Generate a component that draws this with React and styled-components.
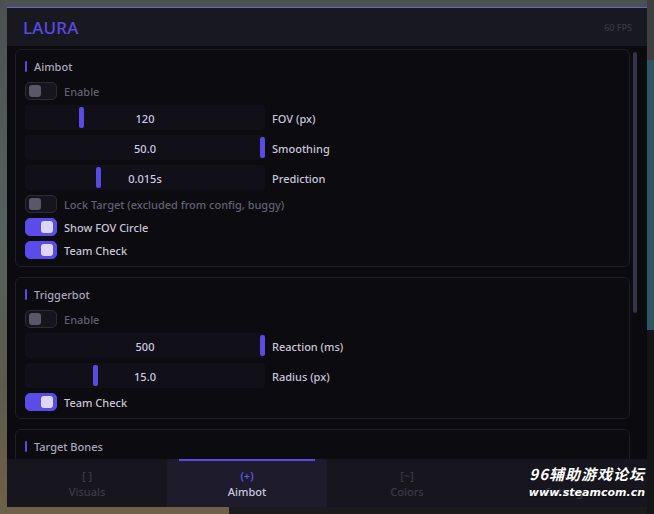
import React from "react";
import styled, { createGlobalStyle } from "styled-components";

const GlobalStyle = createGlobalStyle`
  html, body {
    margin: 0;
    padding: 0;
  }
  body {
    width: 654px;
    height: 514px;
    overflow: hidden;
    font-family: "Noto Sans", "Open Sans", sans-serif;
    background:
      linear-gradient(to bottom, #3f3f40 0 60px, #2f5762 60px 330px, #151517 330px) right top / 7px 100% no-repeat,
      linear-gradient(#1b1b1d, #1b1b1d) 229px bottom / 100% 7px no-repeat,
      linear-gradient(to bottom, #4d5051 0%, #56605f 45%, #5d5a4c 75%, #6d6149 100%);
  }
`;

const Page = styled.div`
  position: relative;
  width: 654px;
  height: 514px;
  padding: 7px 0 0 7px;
  box-sizing: border-box;
`;

const Window = styled.div`
  width: 640px;
  height: 500px;
  display: flex;
  flex-direction: column;
  background: #0b0a0e;
  border-top: 1px solid #6c5fd6;
  box-sizing: border-box;
  overflow: hidden;
`;

const Header = styled.div`
  height: 38px;
  flex-shrink: 0;
  display: flex;
  align-items: center;
  justify-content: space-between;
  padding: 0 15px 0 16px;
  background: #181821;
`;

const Brand = styled.div`
  font-size: 17px;
  font-weight: 500;
  color: #5a49e2;
  letter-spacing: 0.2px;
`;

const Fps = styled.div`
  font-size: 9px;
  color: #393846;
  font-weight: 500;
`;

const Body = styled.div`
  position: relative;
  flex: 1;
  overflow: hidden;
  padding: 3px 17px 0 8px;
  display: flex;
  flex-direction: column;
  gap: 10px;
`;

const Scrollbar = styled.div`
  position: absolute;
  right: 10px;
  top: 6px;
  width: 4px;
  height: 261px;
  border-radius: 2px;
  background: #363449;
`;

const Card = styled.section`
  flex-shrink: 0;
  border: 1px solid #1e1d26;
  border-radius: 6px;
  background: #0c0b10;
  padding: 9px 10px 7px 9px;
  display: flex;
  flex-direction: column;
  gap: 5px;
`;

const CardTitle = styled.div`
  display: flex;
  align-items: center;
  gap: 7px;
  height: 14px;
  margin-bottom: 4px;
  font-size: 11px;
  font-weight: 500;
  color: #aaa6bc;
  &::before {
    content: "";
    width: 2px;
    height: 11px;
    background: #5a49e2;
    border-radius: 1px;
  }
`;

const ToggleRow = styled.div`
  display: flex;
  align-items: center;
  gap: 7px;
  height: 18px;
`;

const Switch = styled.div`
  width: 32px;
  height: 18px;
  box-sizing: border-box;
  border-radius: 5px;
  border: 1px solid ${(p) => (p.$on ? "#5b4be8" : "#2b2a35")};
  background: ${(p) => (p.$on ? "#5b4be8" : "#16151d")};
  display: flex;
  align-items: center;
  justify-content: ${(p) => (p.$on ? "flex-end" : "flex-start")};
  padding: 0 3px;
  &::after {
    content: "";
    width: 12px;
    height: 12px;
    border-radius: 3px;
    background: ${(p) => (p.$on ? "#dcd7ff" : "#5a5867")};
  }
`;

const ToggleLabel = styled.span`
  font-size: 11px;
  font-weight: 500;
  color: ${(p) => (p.$on ? "#c9c5d9" : "#62606f")};
`;

const SliderRow = styled.div`
  display: flex;
  align-items: center;
  gap: 7px;
  height: 25px;
`;

const Track = styled.div`
  position: relative;
  width: 240px;
  height: 25px;
  padding-top: 1px;
  box-sizing: border-box;
  border-radius: 4px;
  background: #111019;
  display: flex;
  align-items: center;
  justify-content: center;
  font-size: 11px;
  font-weight: 500;
  color: #cfcbe0;
`;

const Thumb = styled.div`
  position: absolute;
  top: 2px;
  width: 5px;
  height: 21px;
  border-radius: 2px;
  background: #5a49e2;
`;

const SliderLabel = styled.span`
  font-size: 11px;
  font-weight: 500;
  color: #c9c5d9;
  padding-top: 1px;
`;

const TabBar = styled.nav`
  height: 48px;
  flex-shrink: 0;
  display: grid;
  grid-template-columns: repeat(4, 1fr);
  background: #17161e;
`;

const Tab = styled.div`
  position: relative;
  display: flex;
  flex-direction: column;
  align-items: center;
  justify-content: center;
  gap: 2px;
  padding-top: 2px;
  background: ${(p) => (p.$active ? "#1d1b2c" : "transparent")};
  border-radius: 4px 4px 0 0;
  font-size: 11px;
  font-weight: 500;
  &::before {
    content: "";
    display: ${(p) => (p.$active ? "block" : "none")};
    position: absolute;
    top: 0;
    left: 12px;
    right: 12px;
    height: 2px;
    background: #5a49e2;
  }
`;

const TabIcon = styled.span`
  color: ${(p) => (p.$active ? "#6657ec" : "#3b3a47")};
  line-height: 14px;
  white-space: pre;
`;

const TabLabel = styled.span`
  color: ${(p) => (p.$active ? "#cbc7dd" : "#3b3a47")};
  line-height: 14px;
`;

const Watermark = styled.div`
  position: absolute;
  right: 9px;
  bottom: 14px;
  display: flex;
  flex-direction: column;
  align-items: flex-end;
  gap: 3px;
  color: #ffffff;
  font-style: italic;
  font-weight: 700;
  text-shadow: 0 0 2px rgba(0, 0, 0, 0.6);
`;

const WmTitle = styled.span`
  font-family: "Noto Sans CJK SC", sans-serif;
  font-size: 15px;
  letter-spacing: 1px;
  line-height: 18px;
`;

const WmUrl = styled.span`
  font-family: "DejaVu Sans", sans-serif;
  font-size: 11px;
  line-height: 14px;
`;

const Toggle = ({ on, label }) => (
  <ToggleRow>
    <Switch $on={on} />
    <ToggleLabel $on={on}>{label}</ToggleLabel>
  </ToggleRow>
);

const Slider = ({ value, fraction, label }) => (
  <SliderRow>
    <Track>
      <Thumb style={{ left: `calc(${fraction} * (100% - 5px))` }} />
      {value}
    </Track>
    <SliderLabel>{label}</SliderLabel>
  </SliderRow>
);

const tabs = [
  { icon: "[ ]", label: "Visuals" },
  { icon: "(+)", label: "Aimbot", active: true },
  { icon: "[~]", label: "Colors" },
  { icon: "[=]", label: "Settings" },
];

export default function App() {
  return (
    <>
      <GlobalStyle />
      <Page>
        <Window>
          <Header>
            <Brand>LAURA</Brand>
            <Fps>60 FPS</Fps>
          </Header>
          <Body>
            <Card>
              <CardTitle>Aimbot</CardTitle>
              <Toggle label="Enable" />
              <Slider value="120" fraction={0.23} label="FOV (px)" />
              <Slider value="50.0" fraction={1} label="Smoothing" />
              <Slider value="0.015s" fraction={0.3} label="Prediction" />
              <Toggle label="Lock Target (excluded from config, buggy)" />
              <Toggle on label="Show FOV Circle" />
              <Toggle on label="Team Check" />
            </Card>
            <Card>
              <CardTitle>Triggerbot</CardTitle>
              <Toggle label="Enable" />
              <Slider value="500" fraction={1} label="Reaction (ms)" />
              <Slider value="15.0" fraction={0.29} label="Radius (px)" />
              <Toggle on label="Team Check" />
            </Card>
            <Card>
              <CardTitle>Target Bones</CardTitle>
              <Toggle on label="Head" />
            </Card>
            <Scrollbar />
          </Body>
          <TabBar>
            {tabs.map((t) => (
              <Tab key={t.label} $active={t.active}>
                <TabIcon $active={t.active}>{t.icon}</TabIcon>
                <TabLabel $active={t.active}>{t.label}</TabLabel>
              </Tab>
            ))}
          </TabBar>
        </Window>
        <Watermark>
          <WmTitle>96辅助游戏论坛</WmTitle>
          <WmUrl>www.steamcom.cn</WmUrl>
        </Watermark>
      </Page>
    </>
  );
}
